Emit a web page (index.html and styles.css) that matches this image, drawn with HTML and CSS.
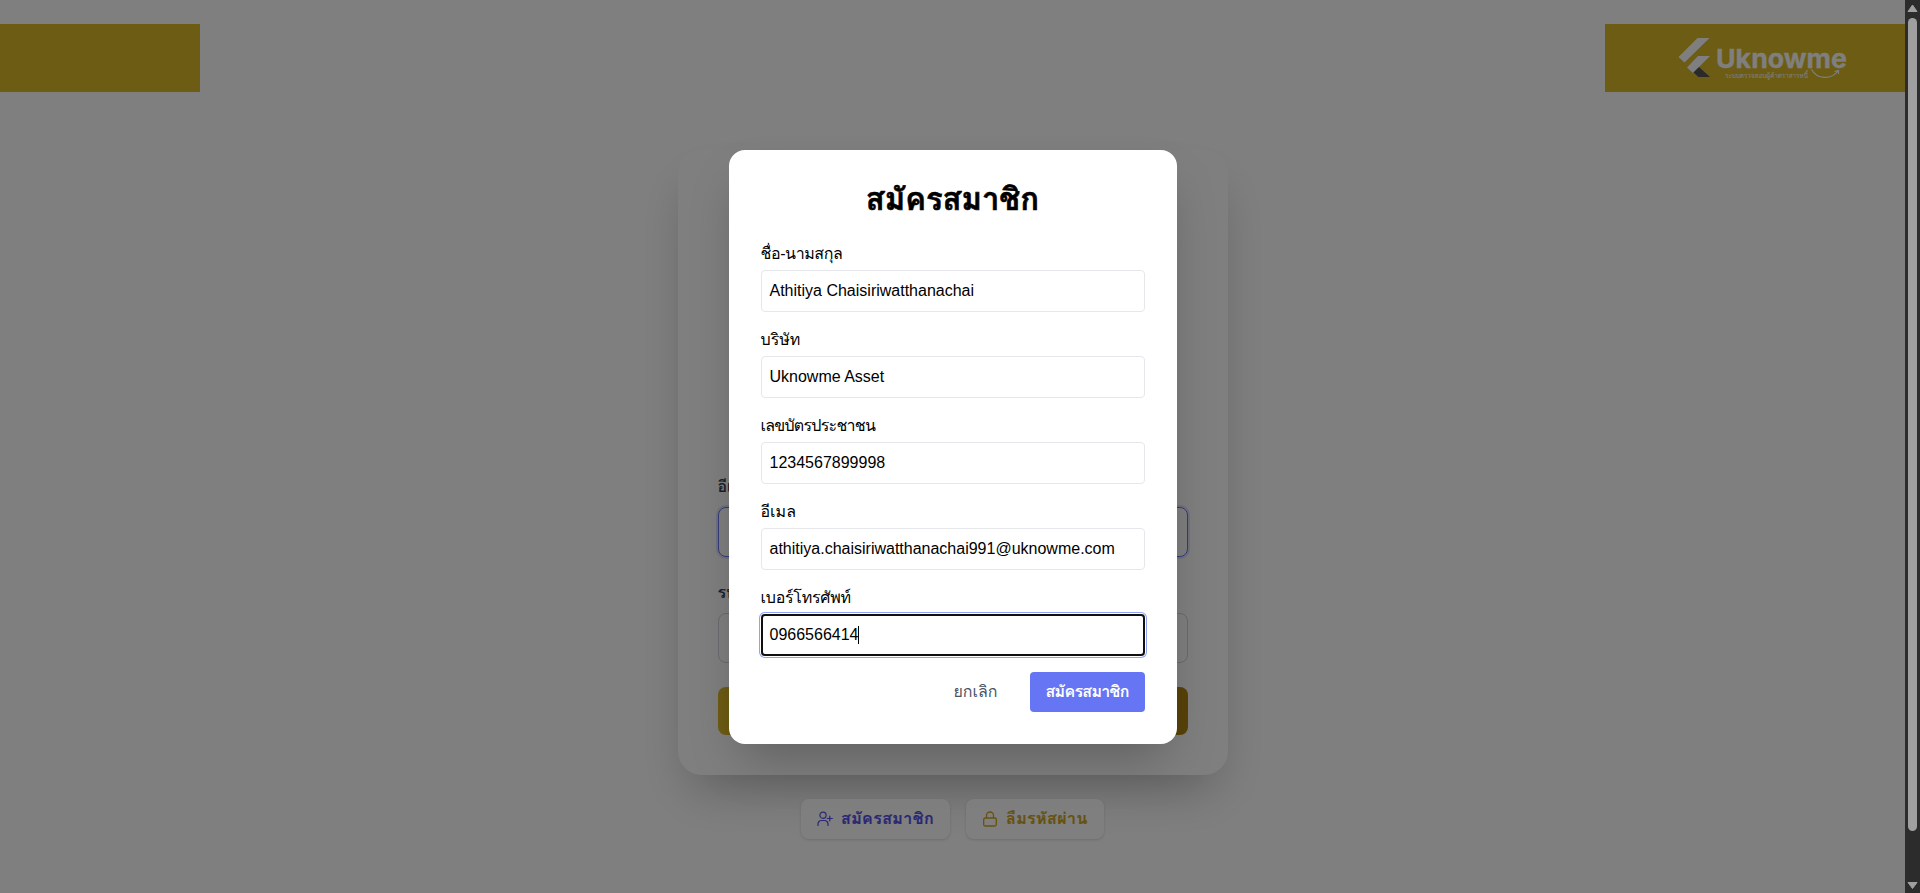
FILE: index.html
```html
<!DOCTYPE html>
<html lang="th">
<head>
<meta charset="utf-8">
<title>Uknowme</title>
<link rel="stylesheet" href="styles.css">
</head>
<body>
<div class="app">
  <div class="page">
    <header class="header">
      <div class="band band-left"></div>
      <div class="band band-right">
        <svg class="logo" width="180" height="56" viewBox="1670 30 180 56">
          <path d="M1697.500 38H1709.500L1684.500 62.500L1678.500 57Z" fill="#fff"/>
          <path d="M1698 56H1710L1693 73L1687 67.500Z" fill="#fff"/>
          <path d="M1699 67L1710 77H1698.500L1693.500 72.500Z" fill="#555"/>
          <text class="logo-name" x="1716" y="68" textLength="131" lengthAdjust="spacingAndGlyphs">Uknowme</text>
          <text class="logo-tag" x="1725" y="78" textLength="83" lengthAdjust="spacingAndGlyphs">ระบบตรวจสอบผู้ค้าตราสารหนี้</text>
          <path d="M1811.500 69.500C1817 79.500 1831 80 1838 71M1834.500 71.500L1838.500 70.500L1838.500 74" fill="none" stroke="#fff" stroke-width="1.200"/>
        </svg>
      </div>
    </header>
    <main class="main">
      <section class="card">
        <div class="card-label">อีเมล</div>
        <div class="card-input is-active"></div>
        <div class="card-label">รหัสผ่าน</div>
        <div class="card-input"></div>
        <div class="card-submit"></div>
      </section>
      <nav class="links">
        <a class="link link-register">
          <svg width="16" height="16" viewBox="0 0 16 16" fill="none" stroke="currentColor" stroke-width="1.200" stroke-linecap="round"><circle cx="6" cy="4.200" r="3.100"/><path d="M1 14.500V13a3.500 3.500 0 0 1 3.500-3.500h3A3.500 3.500 0 0 1 11 13v1.500M12.800 5v5M10.300 7.500h5"/></svg>
          <span>สมัครสมาชิก</span>
        </a>
        <a class="link link-forgot">
          <svg width="16" height="16" viewBox="0 0 16 16" fill="none" stroke="currentColor" stroke-width="1.300"><rect x="1.700" y="7" width="12.600" height="8" rx="1.500"/><path d="M4.500 7V4.500a3.500 3.500 0 0 1 7 0V7"/></svg>
          <span>ลืมรหัสผ่าน</span>
        </a>
      </nav>
    </main>
  </div>
  <div class="scrollbar">
    <svg width="15" height="16" viewBox="0 0 15 16"><path d="M7.500 5L12 11.500H3Z" fill="#9f9f9f" stroke="#9f9f9f" stroke-linejoin="round"/></svg>
    <div class="thumb"></div>
    <svg width="15" height="16" viewBox="0 0 15 16"><path d="M7.500 11.500L12 5.500H3Z" fill="#9f9f9f" stroke="#9f9f9f" stroke-linejoin="round"/></svg>
  </div>
</div>
<div class="overlay">
  <div class="modal">
    <h2 class="title">สมัครสมาชิก</h2>
    <div class="field field-name"><label class="label">ชื่อ-นามสกุล</label><div class="input">Athitiya Chaisiriwatthanachai</div></div>
    <div class="field"><label class="label">บริษัท</label><div class="input">Uknowme Asset</div></div>
    <div class="field field-id"><label class="label">เลขบัตรประชาชน</label><div class="input">1234567899998</div></div>
    <div class="field"><label class="label">อีเมล</label><div class="input">athitiya.chaisiriwatthanachai991@uknowme.com</div></div>
    <div class="field field-phone"><label class="label">เบอร์โทรศัพท์</label><div class="input is-focused">0966566414<i class="caret"></i></div></div>
    <div class="actions">
      <button class="btn btn-cancel">ยกเลิก</button>
      <button class="btn btn-submit">สมัครสมาชิก</button>
    </div>
  </div>
</div>
</body>
</html>
```
FILE: styles.css
```css
* { box-sizing: border-box; }
body {
  margin: 0;
  height: 893px;
  overflow: hidden;
  font: 16px/24px "Liberation Sans", Tahoma, Loma, Waree, "Noto Sans Thai Looped", "Noto Looped Thai", "Noto Sans Thai", "Noto Sans", sans-serif;
  color: #000;
}
.app { display: flex; height: 893px; }
.page { flex: 1; height: 893px; background: #fff; }
.header { display: flex; justify-content: space-between; padding: 24px 0 0; height: 120px; }
.band { height: 68px; background: #dab826; }
.band-left { width: 200px; }
.band-right { width: 300px; padding: 6px 0 0 65px; }
.logo { display: block; }
.logo-name { font: 700 26px Inter, sans-serif; fill: #fff; stroke: #fff; stroke-width: .3px; stroke-linejoin: round; }
.logo-tag { font-size: 7px; fill: #fff; }
.main { display: flex; flex-direction: column; align-items: center; padding-top: 30px; }
.card {
  display: flex;
  flex-direction: column;
  justify-content: flex-end;
  width: 550px;
  height: 625px;
  padding: 40px;
  border-radius: 24px;
  background: #fff;
  box-shadow: 0 25px 50px -12px rgba(0, 0, 0, .25);
}
.card-label { height: 24px; margin-bottom: 8px; font-weight: 700; color: #374151; }
.card-input { height: 50px; margin-bottom: 24px; border: 1px solid #d1d5db; border-radius: 8px; }
.card-input.is-active { border-color: #6675f1; box-shadow: 0 0 0 2px rgba(102, 117, 241, .2); }
.card-submit { height: 48px; border-radius: 8px; background: linear-gradient(90deg, #dab826, #b08413); }
.links { display: flex; gap: 16px; padding-top: 24px; }
.link {
  display: flex;
  align-items: center;
  gap: 8px;
  height: 40px;
  padding: 0 16px;
  border-radius: 8px;
  background: #fff;
  font-weight: 700;
  letter-spacing: .4px;
  box-shadow: 0 1px 3px rgba(0, 0, 0, .15);
  white-space: nowrap;
}
.link svg { flex: none; }
.link span { -webkit-text-stroke: .2px; }
.link-register { width: 149px; color: #5750e6; }
.link-forgot { width: 138px; color: #cda51c; }
.scrollbar { z-index: 2; display: flex; flex-direction: column; justify-content: space-between; width: 15px; background: #2c2c2c; }
.scrollbar svg { display: block; }
.thumb { width: 9px; height: 813px; margin: 2px 3px auto; border-radius: 5px; background: #9f9f9f; }
.overlay {
  position: absolute;
  inset: 0 15px 0 0;
  display: flex;
  align-items: center;
  justify-content: center;
  background: rgba(0, 0, 0, .5);
}
.modal {
  width: 448px;
  height: 594px;
  padding: 32px;
  border-radius: 16px;
  background: #fff;
  box-shadow: 0 25px 50px -12px rgba(0, 0, 0, .25);
}
.title {
  height: 36px;
  margin: 0 0 24px;
  font-size: 31px;
  line-height: 36px;
  text-align: center;
  -webkit-text-stroke: .6px;
}
.field { margin-bottom: 16px; }
.label { display: block; height: 24px; margin-bottom: 4px; }
.field-name .label { letter-spacing: -.4px; }
.field-id .label { letter-spacing: -.75px; }
.field-phone .label { letter-spacing: -.25px; }
.input { display: flex; height: 42px; padding: 8px; border: 1px solid #e5e7eb; border-radius: 4px; }
.input.is-focused { padding: 7px; border: 2px solid #101010; box-shadow: 0 0 0 1px #fff, 0 0 0 2px #8ea3f5; }
.caret { width: 1px; height: 18px; margin-top: 3px; background: #000; }
.actions { display: flex; justify-content: flex-end; gap: 16px; }
.btn { height: 40px; padding: 0 16px; border: 0; border-radius: 4px; font: inherit; white-space: nowrap; }
.btn-cancel { background: none; color: #4b5563; }
.btn-submit { width: 115px; background: #6675f3; color: #fff; font-weight: 700; letter-spacing: -.7px; }
```
